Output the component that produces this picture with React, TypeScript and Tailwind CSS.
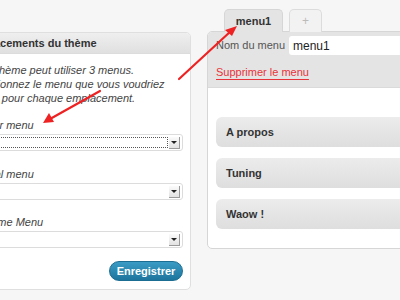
const SelectBox = ({ focused }: { focused?: boolean }) => (
  <div className="mt-[2px] h-[17px] bg-white border border-[#dcdcdc] rounded-[3px] flex items-center justify-end pr-[2px] relative">
    {focused && (
      <div className="absolute left-[2px] right-[14px] top-[2px] bottom-[2px] border border-dotted border-[#555]" />
    )}
    <div className="w-[11px] h-[12px] bg-gradient-to-b from-[#fbfbfb] to-[#e2e2e2] border-r border-b border-[#9a9a9a] flex items-center justify-center">
      <div className="w-0 h-0 border-l-[3px] border-r-[3px] border-t-[3px] border-l-transparent border-r-transparent border-t-[#222]" />
    </div>
  </div>
);

const MenuBar = ({ label }: { label: string }) => (
  <div className="h-[30px] rounded-[6px] bg-gradient-to-b from-[#ececec] to-[#dedede] flex items-center pl-[10px] text-[11px] font-bold text-[#333]">
    {label}
  </div>
);

export default function App() {
  return (
    <div className="w-[400px] h-[300px] overflow-hidden relative bg-[#f6f6f6] font-['Liberation_Sans',Arial,sans-serif]">
      <div className="flex items-start ml-[-44px]">
        {/* left panel */}
        <div className="mt-[32px] w-[235px] shrink-0 bg-white border border-[#dfdfdf] rounded-[5px] overflow-hidden">
          <div className="h-[21px] bg-gradient-to-b from-[#efefef] to-[#e0e0e0] border-b border-[#dcdcdc] flex items-center pl-[10px] text-[11px] font-bold text-[#333]">
            Emplacements du thème
          </div>
          <div className="pl-[10px] pr-[7px] pt-[9px] pb-[8px]">
            <p className="italic text-[11px] leading-[14px] text-[#444]">
              Votre thème peut utiliser 3 menus.
              <br />
              Sélectionnez le menu que vous voudriez
              <br />
              utiliser pour chaque emplacement.
            </p>
            <div className="mt-[13px] italic text-[11px] leading-[14px] text-[#444]">Header menu</div>
            <SelectBox focused />
            <div className="mt-[16px] italic text-[11px] leading-[14px] text-[#444]">Vertical menu</div>
            <SelectBox />
            <div className="mt-[15px] italic text-[11px] leading-[14px] text-[#444]">Welcome Menu</div>
            <SelectBox />
            <div className="mt-[13px] flex justify-end">
              <button className="w-[74px] h-[20px] rounded-full bg-gradient-to-b from-[#3a9bc4] to-[#1d759d] border border-[#1b6d92] text-white text-[11px] font-bold">
                Enregistrer
              </button>
            </div>
          </div>
        </div>

        {/* right panel */}
        <div className="ml-[16px] mt-[8px] w-[220px] shrink-0">
          <div className="flex items-end pl-[17px] gap-[6px]">
            <div className="w-[59px] h-[23px] bg-[#e4e4e4] border border-b-0 border-[#d6d6d6] rounded-t-[5px] flex items-center justify-center text-[11px] font-bold text-[#333] relative top-[1px]">
              menu1
            </div>
            <div className="w-[33px] h-[23px] bg-[#f2f2f2] border border-b-0 border-[#dcdcdc] rounded-t-[5px] flex items-center justify-center text-[12px] text-[#bbb] relative top-[1px]">
              +
            </div>
          </div>
          <div className="bg-white border border-[#d6d6d6] rounded-[5px] overflow-hidden">
            <div className="h-[56px] bg-[#e4e4e4] border-b border-[#dadada] pl-[8px] pt-[4px]">
              <div className="flex items-center h-[19px]">
                <span className="text-[11px] text-[#555] w-[73px]">Nom du menu</span>
                <div className="flex-1 h-[19px] bg-white rounded-l-[3px] flex items-center pl-[4px] text-[12px] text-[#222]">
                  menu1
                </div>
              </div>
              <div className="mt-[9px] text-[11px] text-[#e8333a] underline underline-offset-[3px]">
                Supprimer le menu
              </div>
            </div>
            <div className="pl-[8px] pt-[29px] pb-[19px] flex flex-col gap-[11px]">
              <MenuBar label="A propos" />
              <MenuBar label="Tuning" />
              <MenuBar label="Waow !" />
            </div>
          </div>
        </div>
      </div>

      <svg className="absolute inset-0 pointer-events-none" width="400" height="300" viewBox="0 0 400 300">
        <g stroke="#ee2222" strokeWidth="2.2" fill="#ee2222" strokeLinecap="round">
          <line x1="179" y1="79" x2="231" y2="31" />
          <polygon points="237,26 225,30 232,36" stroke="none" />
          <line x1="100" y1="91" x2="50" y2="119" />
          <polygon points="43,123 49,113 54,122" stroke="none" />
        </g>
      </svg>
    </div>
  );
}
